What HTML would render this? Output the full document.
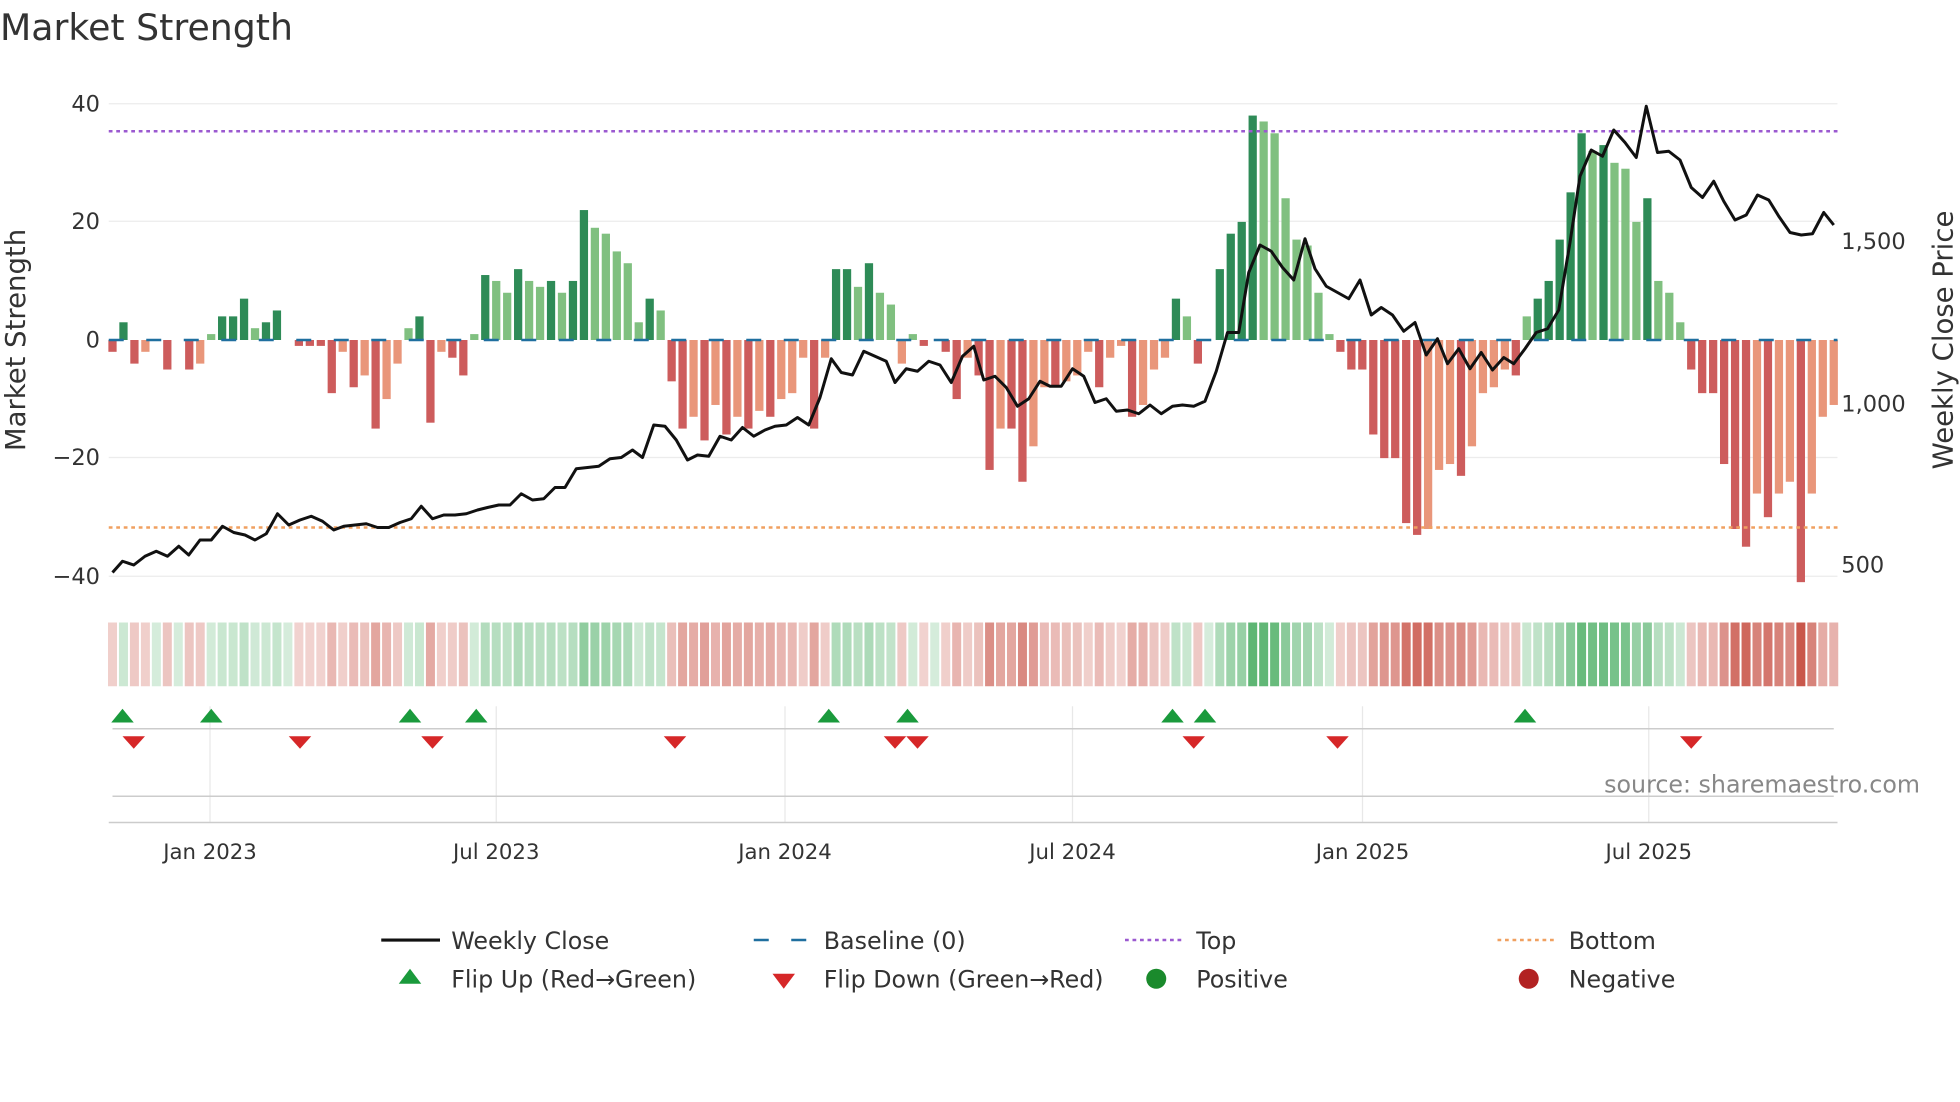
<!DOCTYPE html>
<html><head><meta charset="utf-8"><style>
html,body{margin:0;padding:0;background:#fff;}
svg{display:block;font-family:"DejaVu Sans","Liberation Sans",sans-serif;}
</style></head><body>
<svg id="s" width="1960" height="1102" viewBox="0 0 1568 881.6" xmlns="http://www.w3.org/2000/svg">
<rect width="1568" height="882" fill="#fff"/>
<text x="0" y="32" font-size="29" fill="#333">Market Strength</text>
<g stroke="#ececec" stroke-width="1">
<line x1="87" x2="1470" y1="83" y2="83"/><line x1="87" x2="1470" y1="177" y2="177"/>
<line x1="87" x2="1470" y1="366" y2="366"/><line x1="87" x2="1470" y1="461" y2="461"/>
</g>
<g id="bars"></g>
<line x1="87" x2="1470" y1="272" y2="272" stroke="#1f6f9f" stroke-width="2" stroke-dasharray="12 18"/>
<line x1="87" x2="1470" y1="105" y2="105" stroke="#9b59d0" stroke-width="2" stroke-dasharray="3 3"/>
<line x1="87" x2="1470" y1="422" y2="422" stroke="#f0a060" stroke-width="2" stroke-dasharray="3 3"/>
<polyline id="price" fill="none" stroke="#111" stroke-width="2.4" stroke-linejoin="round"/>
<g font-size="18" fill="#333" text-anchor="end">
<text x="80" y="89">40</text><text x="80" y="183">20</text><text x="80" y="278">0</text>
<text x="80" y="372">−20</text><text x="80" y="467">−40</text>
</g>
<g font-size="18" fill="#333">
<text x="1473" y="199">1,500</text><text x="1473" y="329">1,000</text><text x="1473" y="458">500</text>
</g>
<text transform="translate(20,272) rotate(-90)" font-size="22" fill="#333" text-anchor="middle">Market Strength</text>
<text transform="translate(1562,272) rotate(-90)" font-size="22" fill="#333" text-anchor="middle">Weekly Close Price</text>
<g id="heat"></g>
<g stroke="#e8e8e8" stroke-width="1">
<line x1="168" x2="168" y1="565" y2="658"/><line x1="397" x2="397" y1="565" y2="658"/>
<line x1="628" x2="628" y1="565" y2="658"/><line x1="858" x2="858" y1="565" y2="658"/>
<line x1="1090" x2="1090" y1="565" y2="658"/><line x1="1319" x2="1319" y1="565" y2="658"/>
</g>
<line x1="90" x2="1467" y1="583" y2="583" stroke="#ccc" stroke-width="1.2"/>
<line x1="90" x2="1467" y1="637" y2="637" stroke="#ccc" stroke-width="1.2"/>
<line x1="87" x2="1470" y1="658" y2="658" stroke="#ccc" stroke-width="1.2"/>
<g id="flips"></g>
<text x="1536" y="634" font-size="19" fill="#888" text-anchor="end">source: sharemaestro.com</text>
<g font-size="17" fill="#333" text-anchor="middle">
<text x="168" y="687">Jan 2023</text><text x="397" y="687">Jul 2023</text><text x="628" y="687">Jan 2024</text>
<text x="858" y="687">Jul 2024</text><text x="1090" y="687">Jan 2025</text><text x="1319" y="687">Jul 2025</text>
</g>
<g font-size="19" fill="#333">
<line x1="305" x2="352" y1="752" y2="752" stroke="#111" stroke-width="2.5"/>
<text x="361" y="759">Weekly Close</text>
<line x1="603" x2="647" y1="752" y2="752" stroke="#1f6f9f" stroke-width="2" stroke-dasharray="12 18"/>
<text x="659" y="759">Baseline (0)</text>
<line x1="900" x2="945" y1="752" y2="752" stroke="#9b59d0" stroke-width="2" stroke-dasharray="3 3"/>
<text x="957" y="759">Top</text>
<line x1="1198" x2="1243" y1="752" y2="752" stroke="#f0a060" stroke-width="2" stroke-dasharray="3 3"/>
<text x="1255" y="759">Bottom</text>
<polygon points="319,787 337,787 328,775" fill="#1a9a3c"/>
<text x="361" y="790">Flip Up (Red→Green)</text>
<polygon points="618,779 636,779 627,791" fill="#d62728"/>
<text x="659" y="790">Flip Down (Green→Red)</text>
<circle cx="925" cy="783" r="8" fill="#1a8a2c"/>
<text x="957" y="790">Positive</text>
<circle cx="1223" cy="783" r="8" fill="#b22222"/>
<text x="1255" y="790">Negative</text>
</g>
</svg>
<script>
var v=[-2,3,-4,-2,0,-5,0,-5,-4,1,4,4,7,2,3,5,0,-1,-1,-1,-9,-2,-8,-6,-15,-10,-4,2,4,-14,-2,-3,-6,1,11,10,8,12,10,9,10,8,10,22,19,18,15,13,3,7,5,-7,-15,-13,-17,-11,-16,-13,-15,-12,-13,-10,-9,-3,-15,-3,12,12,9,13,8,6,-4,1,-1,0,-2,-10,-3,-6,-22,-15,-15,-24,-18,-8,-8,-7,-6,-2,-8,-3,-1,-13,-11,-5,-3,7,4,-4,0,12,18,20,38,37,35,24,17,16,8,1,-2,-5,-5,-16,-20,-20,-31,-33,-32,-22,-21,-23,-18,-9,-8,-5,-6,4,7,10,17,25,35,32,33,30,29,20,24,10,8,3,-5,-9,-9,-21,-32,-35,-26,-30,-26,-24,-41,-26,-13,-11];
var p=[[90,458],[98,449],[107,452],[116,445],[125,441],[134,445],[143,437],[151,444],[160,432],[169,432],[178,421],[187,426],[196,428],[204,432],[213,427],[222,411],[231,420],[240,416],[249,413],[258,417],[267,424],[275,421],[284,420],[293,419],[302,422],[311,422],[320,418],[329,415],[337,405],[346,415],[355,412],[364,412],[373,411],[382,408],[390,406],[399,404],[408,404],[417,395],[426,400],[435,399],[444,390],[452,390],[461,375],[470,374],[479,373],[488,367],[497,366],[506,360],[514,366],[523,340],[532,341],[541,352],[550,368],[558,364],[567,365],[576,349],[585,352],[594,342],[603,349],[612,344],[620,341],[629,340],[638,334],[647,340],[656,318],[665,287],[673,298],[682,300],[691,281],[700,285],[709,289],[716,306],[725,295],[734,297],[743,289],[752,292],[761,306],[770,285],[779,277],[787,304],[796,301],[805,310],[814,325],[823,319],[832,305],[840,309],[849,309],[858,295],[867,301],[876,322],[885,319],[893,329],[902,328],[911,331],[920,324],[929,331],[938,325],[946,324],[955,325],[964,321],[973,297],[982,266],[991,266],[999,218],[1008,196],[1017,201],[1026,214],[1035,224],[1044,191],[1052,215],[1061,229],[1070,234],[1079,239],[1088,224],[1097,252],[1105,246],[1114,252],[1123,265],[1132,258],[1141,284],[1150,271],[1158,291],[1167,279],[1176,295],[1185,282],[1194,296],[1203,286],[1211,291],[1220,279],[1229,266],[1238,263],[1247,248],[1256,194],[1264,141],[1273,120],[1282,125],[1291,104],[1300,114],[1309,126],[1317,85],[1326,122],[1335,121],[1344,128],[1353,150],[1362,158],[1371,145],[1379,161],[1388,176],[1397,172],[1406,156],[1415,160],[1423,173],[1432,186],[1441,188],[1450,187],[1459,170],[1467,180]];
document.getElementById('price').setAttribute('points',p.map(function(a){return a.join(',')}).join(' '));
var NS="http://www.w3.org/2000/svg",bars=document.getElementById('bars'),heat=document.getElementById('heat');
var n=v.length,step=(1467-90)/(n-1);
function r(g,x,y,w,h,f,o){var e=document.createElementNS(NS,'rect');e.setAttribute('x',x);e.setAttribute('y',y);e.setAttribute('width',w);e.setAttribute('height',h);e.setAttribute('fill',f);if(o!=null)e.setAttribute('fill-opacity',o);g.appendChild(e);}
for(var i=0;i<n;i++){var x=90+i*step,val=v[i],prev=i?v[i-1]:0,dark=Math.abs(val)>=Math.abs(prev);
var h=Math.abs(val)*4.725,y=val>=0?272-h:272,col;
if(val>=0)col=dark?'#2e8b57':'#80c080';else col=dark?'#cd5c5c':'#e9967a';
if(val!=0)r(bars,x-3.3,y,6.6,h,col);
var a=0.25+0.75*Math.min(1,Math.abs(val)/40);
r(heat,x-3.6,498,7.2,51,val>=0?'#3aa655':'#c0392b',a*0.85);}
var fl=document.getElementById('flips');
[98,169,328,381,663,726,938,964,1220].forEach(function(x){var e=document.createElementNS(NS,'polygon');e.setAttribute('points',(x-9)+',578 '+(x+9)+',578 '+x+',567');e.setAttribute('fill','#1a9a3c');fl.appendChild(e);});
[107,240,346,540,716,734,955,1070,1353].forEach(function(x){var e=document.createElementNS(NS,'polygon');e.setAttribute('points',(x-9)+',589 '+(x+9)+',589 '+x+',599');e.setAttribute('fill','#d62728');fl.appendChild(e);});
</script>
</body></html>
